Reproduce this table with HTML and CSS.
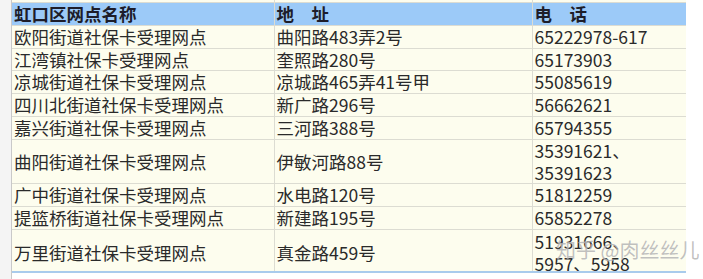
FILE: index.html
```html
<!DOCTYPE html>
<html lang="zh">
<head>
<meta charset="utf-8">
<link rel="stylesheet" href="styles.css">
</head>
<body>
<div class="page">
  <div class="strip"></div>
  <div class="sheet">
    <div class="clip">
      <table class="grid">
        <colgroup><col class="c1"><col class="c2"><col class="c3"></colgroup>
        <tr class="prev"><td></td><td></td><td></td></tr>
        <tr class="head"><td>虹口区网点名称</td><td>地　址</td><td>电　话</td></tr>
        <tr><td>欧阳街道社保卡受理网点</td><td>曲阳路483弄2号</td><td>65222978-617</td></tr>
        <tr><td>江湾镇社保卡受理网点</td><td>奎照路280号</td><td>65173903</td></tr>
        <tr><td>凉城街道社保卡受理网点</td><td>凉城路465弄41号甲</td><td>55085619</td></tr>
        <tr><td>四川北街道社保卡受理网点</td><td>新广路296号</td><td>56662621</td></tr>
        <tr><td>嘉兴街道社保卡受理网点</td><td>三河路388号</td><td>65794355</td></tr>
        <tr><td>曲阳街道社保卡受理网点</td><td>伊敏河路88号</td><td>35391621、<br>35391623</td></tr>
        <tr><td>广中街道社保卡受理网点</td><td>水电路120号</td><td>51812259</td></tr>
        <tr><td>提篮桥街道社保卡受理网点</td><td>新建路195号</td><td>65852278</td></tr>
        <tr class="last"><td>万里街道社保卡受理网点</td><td>真金路459号</td><td>51931666、<br>5957、5958</td></tr>
      </table>
    </div>
  </div>
  <div class="rest"></div>
  <div class="watermark">知乎 @肉丝丝儿</div>
</div>
</body>
</html>
```

FILE: styles.css
```css
html, body {
  margin: 0;
  padding: 0;
  background: #ffffff;
}
.page {
  position: relative;
  display: flex;
  width: 703px;
  height: 279px;
  overflow: hidden;
}
.strip {
  width: 11px;
  background: #f4f4f4;
  border-right: 1px solid #c9c9c9;
  flex: none;
}
.sheet {
  width: 674px;
  flex: none;
}
.clip {
  height: 271px;
  overflow: hidden;
  border-bottom: 2px solid #a9cbec;
  background: #fdfdee;
}
.grid {
  border-collapse: collapse;
  table-layout: fixed;
  width: 675px;
  margin-top: -1px;
  font-family: "Noto Sans CJK SC", "Noto Sans", sans-serif;
  font-size: 17.5px;
  color: #2a2a2a;
}
.c1 { width: 262px; }
.c2 { width: 258px; }
.c3 { width: 155px; }
.grid td {
  border: 1px solid #dcdcd2;
  padding: 0 0 0 2px;
  line-height: 21.8px;
  background: #fdfdee;
  white-space: nowrap;
  vertical-align: middle;
  border-left: none;
}
.grid td + td {
  border-left: 1px solid #dcdcd2;
}
.grid tr.prev td {
  height: 3px;
  line-height: 3px;
  border-top: none;
}
.grid tr.head td {
  background: #9ccaf8;
  font-weight: bold;
  color: #1d1d2a;
  border-left-color: #9ccaf8;
  border-top: none;
}
.grid tr.last td {
  height: 44px;
}
.grid tr.last td:nth-child(3) {
  vertical-align: top;
  padding-top: 1px;
}
.watermark {
  position: absolute;
  left: 556px;
  top: 236px;
  font-family: "Noto Sans CJK SC", sans-serif;
  font-size: 20px;
  line-height: 28px;
  color: rgba(130, 130, 130, 0.5);
  text-shadow: 0 0 1px rgba(255,255,255,0.8);
  white-space: nowrap;
}
.rest {
  flex: 1;
  background: #ffffff;
}
```
